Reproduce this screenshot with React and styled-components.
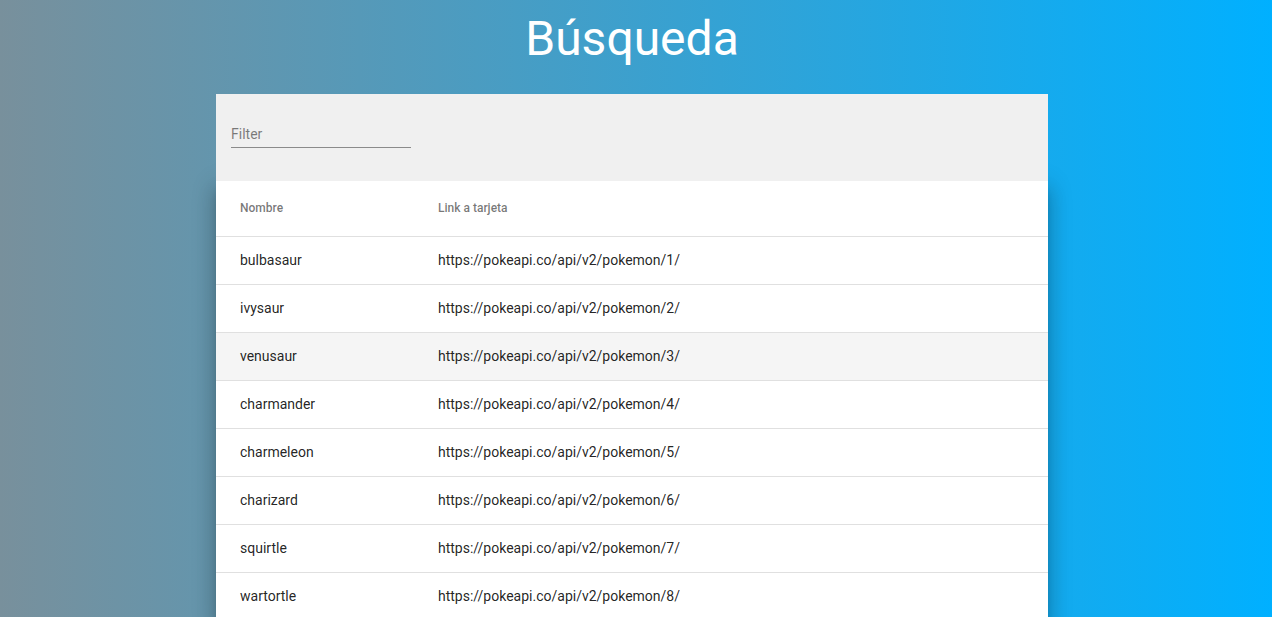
import styled, { createGlobalStyle } from "styled-components";

const GlobalStyle = createGlobalStyle`
  html, body {
    margin: 0;
    padding: 0;
  }
  body {
    font-family: Roboto, "Noto Sans", Arial, sans-serif;
  }
`;

const Page = styled.div`
  height: 100vh;
  overflow: hidden;
  box-sizing: border-box;
  padding-right: 8px;
  background: linear-gradient(to right, #78909c, #00b0ff);
  display: flex;
  flex-direction: column;
  align-items: center;
`;

const Title = styled.h1`
  margin: 0;
  padding: 11px 0 27px;
  font-size: 48px;
  line-height: 56px;
  font-weight: 400;
  color: #fff;
`;

const Card = styled.div`
  width: 832px;
  display: flex;
  flex-direction: column;
`;

const Toolbar = styled.div`
  position: relative;
  z-index: 1;
  height: 87px;
  box-sizing: border-box;
  padding: 28px 15px 0;
  background: #f0f0f0;
`;

const FilterInput = styled.input`
  display: block;
  width: 180px;
  box-sizing: border-box;
  padding: 4px 0 5px;
  border: none;
  border-bottom: 1px solid rgba(0, 0, 0, 0.42);
  background: transparent;
  font-family: inherit;
  font-size: 14px;
  line-height: 16px;
  color: rgba(0, 0, 0, 0.87);
  outline: none;

  &::placeholder {
    color: rgba(0, 0, 0, 0.5);
  }
`;

const Table = styled.div`
  background: #fff;
  box-shadow: 0 7px 8px -4px rgba(0, 0, 0, 0.2),
    0 12px 17px 2px rgba(0, 0, 0, 0.14), 0 5px 22px 4px rgba(0, 0, 0, 0.12);
`;

const Row = styled.div`
  display: grid;
  grid-template-columns: 198px 1fr;
  align-items: center;
  padding: 0 24px 2px;
  height: ${(p) => (p.$head ? 56 : 48)}px;
  box-sizing: border-box;
  border-bottom: 1px solid #e0e0e0;
  background: ${(p) => (p.$hover ? "#f5f5f5" : "#fff")};
  font-size: ${(p) => (p.$head ? 12 : 14)}px;
  font-weight: ${(p) => (p.$head ? 500 : 400)};
  color: ${(p) => (p.$head ? "rgba(0, 0, 0, 0.54)" : "rgba(0, 0, 0, 0.87)")};
`;

const names = [
  "bulbasaur",
  "ivysaur",
  "venusaur",
  "charmander",
  "charmeleon",
  "charizard",
  "squirtle",
  "wartortle",
];

export default function App() {
  return (
    <>
      <GlobalStyle />
      <Page>
        <Title>Búsqueda</Title>
        <Card>
          <Toolbar>
            <FilterInput placeholder="Filter" />
          </Toolbar>
          <Table>
            <Row $head>
              <span>Nombre</span>
              <span>Link a tarjeta</span>
            </Row>
            {names.map((name, i) => (
              <Row key={name} $hover={i === 2}>
                <span>{name}</span>
                <span>https://pokeapi.co/api/v2/pokemon/{i + 1}/</span>
              </Row>
            ))}
          </Table>
        </Card>
      </Page>
    </>
  );
}
